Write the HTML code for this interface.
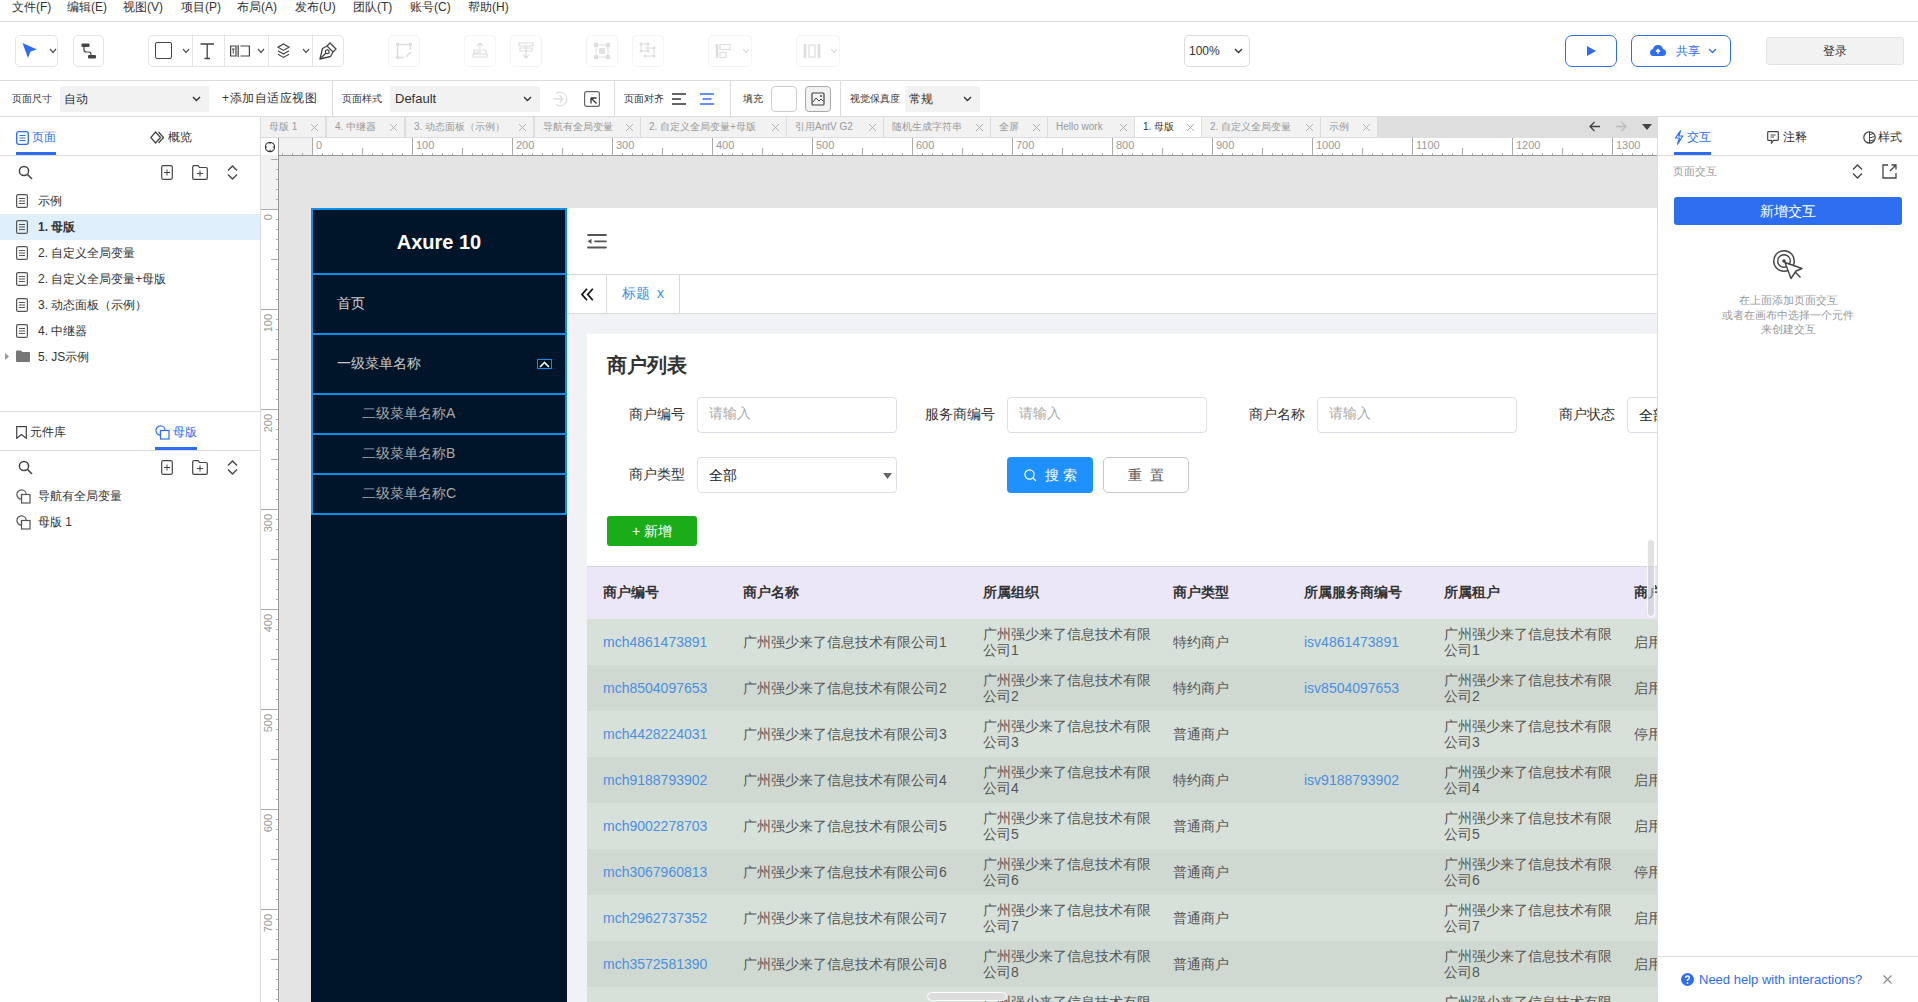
<!DOCTYPE html>
<html><head><meta charset="utf-8">
<style>
*{box-sizing:border-box;margin:0;padding:0}
html,body{width:1918px;height:1002px;overflow:hidden;background:#fff;font-family:"Liberation Sans",sans-serif;color:#333}
.a{position:absolute}
.hl{position:absolute;height:1px;background:#dcdcdc}
.vl{position:absolute;width:1px;background:#dcdcdc}
#menu span{position:absolute;top:0;font-size:12px;line-height:14px;color:#333;white-space:nowrap}
.tb{position:absolute;top:35px;height:32px;border:1px solid #e3e3e3;border-radius:5px;background:#fff}
.tbd{position:absolute;top:35px;height:32px;border:1px solid #f4f4f4;border-radius:5px;background:#fff}
.lbl{position:absolute;font-size:10px;line-height:14px;color:#333;white-space:nowrap}
.dd{position:absolute;top:86px;height:26px;background:#f2f2f2;font-size:12px;line-height:26px;color:#333;padding-left:4px;white-space:nowrap}
.tab{position:absolute;top:117px;height:20px;font-size:11px;line-height:19px;color:#999;white-space:nowrap;border-right:1px solid #dcdcdc}
.tab i{position:absolute;right:4px;top:0;font-style:normal;font-size:12px;color:#888}
.tree{position:absolute;left:0;width:260px;height:26px;font-size:12px;line-height:26px;color:#333;white-space:nowrap}
.tree .ic{position:absolute;left:17px;top:7px;width:11px;height:13px;border:1px solid #555;border-radius:2px}
.tree .ic:before{content:"";position:absolute;left:2px;top:3px;width:5px;height:1px;background:#555;box-shadow:0 2px 0 #555,0 4px 0 #555}
.tree span{position:absolute;left:38px}
</style></head>
<body>
<!-- menu bar -->
<div id="menu">
<span style="left:12px">文件(F)</span>
<span style="left:67px">编辑(E)</span>
<span style="left:123px">视图(V)</span>
<span style="left:181px">项目(P)</span>
<span style="left:237px">布局(A)</span>
<span style="left:295px">发布(U)</span>
<span style="left:353px">团队(T)</span>
<span style="left:410px">账号(C)</span>
<span style="left:468px">帮助(H)</span>
</div>
<div class="hl" style="left:0;top:21px;width:1918px"></div>
<div class="hl" style="left:0;top:80px;width:1918px"></div>
<div class="hl" style="left:0;top:116px;width:1918px"></div>


<!-- toolbar -->
<div class="tb" style="left:15px;width:43px">
 <svg class="a" style="left:5px;top:5px" width="20" height="20" viewBox="0 0 20 20"><path d="M1.5 2 L16 8.5 L9.5 10.5 L7 17 Z" fill="#2f6cf5"/></svg>
 <svg class="a" style="left:33px;top:12px" width="8" height="6" viewBox="0 0 8 6"><path d="M1 1 L4 4.5 L7 1" stroke="#555" stroke-width="1.2" fill="none"/></svg>
</div>
<div class="tb" style="left:73px;width:31px">
 <svg class="a" style="left:6px;top:6px" width="18" height="18" viewBox="0 0 18 18"><rect x="1.5" y="1.5" width="8" height="3.5" rx="1" fill="#444"/><rect x="8" y="13" width="8" height="3.5" rx="1" fill="#444"/><path d="M4 5 L4 8 Q4 10 6.5 10 L9 10 Q11 10 11 12.5 L11 13" stroke="#444" stroke-width="1.2" fill="none"/></svg>
</div>
<div class="tb" style="left:148px;width:196px">
 <div class="a" style="left:43px;top:0;width:1px;height:30px;background:#e3e3e3"></div>
 <div class="a" style="left:75px;top:0;width:1px;height:30px;background:#e3e3e3"></div>
 <div class="a" style="left:119px;top:0;width:1px;height:30px;background:#e3e3e3"></div>
 <div class="a" style="left:163px;top:0;width:1px;height:30px;background:#e3e3e3"></div>
 <div class="a" style="left:6px;top:6px;width:17px;height:17px;border:1.5px solid #444;border-radius:2px"></div>
 <svg class="a" style="left:33px;top:12px" width="8" height="6" viewBox="0 0 8 6"><path d="M1 1 L4 4.5 L7 1" stroke="#555" stroke-width="1.2" fill="none"/></svg>
 <svg class="a" style="left:51px;top:7px" width="15" height="17" viewBox="0 0 15 17"><path d="M0.5 1 L14 1 M7.2 1 L7.2 15.5 M4.5 15.5 L10 15.5" stroke="#444" stroke-width="1.3" fill="none"/></svg>
 <svg class="a" style="left:81px;top:9px" width="20" height="12" viewBox="0 0 20 12"><path d="M0.6 1 L6 1 L6 11 L0.6 11 Z M8.2 0 L8.2 12 M10.5 1 L19.4 1 L19.4 11 L10.5 11" stroke="#444" stroke-width="1.2" fill="none"/><path d="M2 4 L4.6 4 M3.3 4 L3.3 8.5" stroke="#444" stroke-width="1"/></svg>
 <svg class="a" style="left:108px;top:12px" width="8" height="6" viewBox="0 0 8 6"><path d="M1 1 L4 4.5 L7 1" stroke="#555" stroke-width="1.2" fill="none"/></svg>
 <svg class="a" style="left:128px;top:7px" width="13" height="16" viewBox="0 0 13 16"><path d="M6.5 1 L12 4.2 L6.5 7.4 L1 4.2 Z" stroke="#444" stroke-width="1.2" fill="none"/><path d="M1 7.8 L6.5 11 L12 7.8 M1 11.2 L6.5 14.4 L12 11.2" stroke="#444" stroke-width="1.2" fill="none"/></svg>
 <svg class="a" style="left:153px;top:12px" width="8" height="6" viewBox="0 0 8 6"><path d="M1 1 L4 4.5 L7 1" stroke="#555" stroke-width="1.2" fill="none"/></svg>
 <svg class="a" style="left:170px;top:6px" width="18" height="18" viewBox="0 0 18 18"><path d="M11 1 L17 7 L14 10 L11.5 14.5 L1 17 L3.5 6.5 L8 4 Z" stroke="#444" stroke-width="1.3" fill="none" stroke-linejoin="round"/><circle cx="8.3" cy="9.7" r="1.9" stroke="#444" stroke-width="1.2" fill="none"/><path d="M1 17 L7 11" stroke="#444" stroke-width="1.2"/><path d="M8 4 L14 10" stroke="#444" stroke-width="1.1"/></svg>
</div>
<div class="tbd" style="left:388px;width:32px"><svg class="a" style="left:5px;top:5px" width="20" height="20" viewBox="0 0 20 20"><rect x="2" y="2" width="3" height="3" fill="#ddd"/><rect x="15" y="2" width="3" height="3" fill="#ddd"/><rect x="2" y="15" width="3" height="3" fill="#ddd"/><path d="M3.5 5 L3.5 15 M5 3.5 L15 3.5 M16.5 5 L16.5 9 M5 16.5 L10 16.5 M12 16 L17 11" stroke="#ddd" stroke-width="1.5"/></svg></div>
<div class="tbd" style="left:464px;width:32px"><svg class="a" style="left:5px;top:5px" width="20" height="20" viewBox="0 0 20 20"><path d="M10 2 L7 5 M10 2 L13 5 M10 2 L10 12 M4 9 L8 9 L8 12 L4 12 Z M3 13 L17 13 L17 16 L3 16 Z M12 9 L16 9 L16 12" stroke="#ddd" stroke-width="1.2" fill="none"/></svg></div>
<div class="tbd" style="left:510px;width:32px"><svg class="a" style="left:5px;top:5px" width="20" height="20" viewBox="0 0 20 20"><path d="M3 2 L17 2 L17 5 L3 5 Z M4 7 L16 7 L16 10 L4 10 Z M10 5 L10 17 M7 14 L10 17 L13 14" stroke="#ddd" stroke-width="1.2" fill="none"/></svg></div>
<div class="tbd" style="left:586px;width:32px"><svg class="a" style="left:5px;top:5px" width="20" height="20" viewBox="0 0 20 20"><rect x="2" y="2" width="4" height="4" fill="#ddd"/><rect x="14" y="2" width="4" height="4" fill="#ddd"/><rect x="2" y="14" width="4" height="4" fill="#ddd"/><rect x="14" y="14" width="4" height="4" fill="#ddd"/><path d="M4 6 L4 14 M6 4 L14 4 M16 6 L16 14 M6 16 L14 16" stroke="#ddd" stroke-width="1"/><rect x="7" y="7" width="6" height="6" fill="#e2e2e2"/></svg></div>
<div class="tbd" style="left:632px;width:32px"><svg class="a" style="left:5px;top:5px" width="20" height="20" viewBox="0 0 20 20"><circle cx="3" cy="3" r="1.5" fill="#ddd"/><circle cx="10" cy="3" r="1.5" fill="#ddd"/><circle cx="3" cy="10" r="1.5" fill="#ddd"/><circle cx="10" cy="10" r="1.5" fill="#ddd"/><circle cx="16" cy="7" r="1.5" fill="#ddd"/><circle cx="16" cy="15" r="1.5" fill="#ddd"/><circle cx="7" cy="15" r="1.5" fill="#ddd"/><path d="M3 3 L10 3 L10 10 L3 10 Z M7 7 L16 7 L16 15 L7 15" stroke="#ddd" stroke-width="1" fill="none"/></svg></div>
<div class="tbd" style="left:708px;width:44px"><svg class="a" style="left:6px;top:6px" width="18" height="18" viewBox="0 0 18 18"><path d="M2 2 L2 16" stroke="#ddd" stroke-width="2.5"/><rect x="5" y="2.5" width="10" height="5" stroke="#ddd" stroke-width="1.2" fill="none"/><rect x="5" y="10.5" width="6" height="5" stroke="#ddd" stroke-width="1.2" fill="none"/></svg><svg class="a" style="left:33px;top:12px" width="8" height="6" viewBox="0 0 8 6"><path d="M1 1 L4 4.5 L7 1" stroke="#ddd" stroke-width="1.2" fill="none"/></svg></div>
<div class="tbd" style="left:796px;width:44px"><svg class="a" style="left:6px;top:6px" width="18" height="18" viewBox="0 0 18 18"><path d="M2 2 L2 16 M16 2 L16 16" stroke="#ddd" stroke-width="2.5"/><rect x="6" y="3" width="6" height="12" stroke="#ddd" stroke-width="1.2" fill="none"/></svg><svg class="a" style="left:33px;top:12px" width="8" height="6" viewBox="0 0 8 6"><path d="M1 1 L4 4.5 L7 1" stroke="#ddd" stroke-width="1.2" fill="none"/></svg></div>
<div class="tb" style="left:1184px;width:66px;border-color:#dcdcdc"><span class="a" style="left:4px;top:7px;font-size:12px;line-height:16px;color:#333">100%</span><svg class="a" style="left:49px;top:12px" width="9" height="6" viewBox="0 0 9 6"><path d="M1 1 L4.5 4.5 L8 1" stroke="#333" stroke-width="1.4" fill="none"/></svg></div>
<div class="tb" style="left:1565px;width:52px;border-color:#2f6cf5;border-radius:7px"><svg class="a" style="left:19px;top:9px" width="12" height="12" viewBox="0 0 12 12"><path d="M2 1 L11 6 L2 11 Z" fill="#2f6cf5"/></svg></div>
<div class="tb" style="left:1631px;width:100px;border-color:#2f6cf5;border-radius:7px">
 <svg class="a" style="left:17px;top:7px" width="18" height="16" viewBox="0 0 18 16"><path d="M4.5 13 Q1 13 1 9.5 Q1 6.5 4 6 Q5 2 9 2 Q13 2 14 6 Q17 6.5 17 9.5 Q17 13 13.5 13 Z" fill="#2f6cf5"/><path d="M9 11 L9 6.5 M7 8.5 L9 6.5 L11 8.5" stroke="#fff" stroke-width="1.3" fill="none"/></svg>
 <span class="a" style="left:44px;top:7px;font-size:12px;line-height:16px;color:#2f6cf5">共享</span>
 <svg class="a" style="left:76px;top:12px" width="9" height="6" viewBox="0 0 9 6"><path d="M1 1 L4.5 4.5 L8 1" stroke="#2f6cf5" stroke-width="1.3" fill="none"/></svg>
</div>
<div class="a" style="left:1766px;top:37px;width:138px;height:28px;background:#f2f2f2;border:1px solid #e3e3e3;border-radius:3px;font-size:12px;line-height:26px;text-align:center;color:#333">登录</div>

<!-- property bar -->
<span class="lbl" style="left:12px;top:92px">页面尺寸</span>
<div class="dd" style="left:60px;width:149px">自动<svg class="a" style="left:132px;top:10px" width="9" height="6" viewBox="0 0 9 6"><path d="M1 1 L4.5 4.5 L8 1" stroke="#333" stroke-width="1.4" fill="none"/></svg></div>
<span class="lbl" style="left:222px;top:91px;font-size:12px;letter-spacing:0.5px">+添加自适应视图</span>
<div class="vl" style="left:332px;top:81px;height:35px"></div>
<span class="lbl" style="left:342px;top:92px">页面样式</span>
<div class="dd" style="left:390px;width:150px;padding-left:5px;font-size:13px">Default<svg class="a" style="left:133px;top:10px" width="9" height="6" viewBox="0 0 9 6"><path d="M1 1 L4.5 4.5 L8 1" stroke="#333" stroke-width="1.4" fill="none"/></svg></div>
<svg class="a" style="left:552px;top:91px" width="16" height="16" viewBox="0 0 16 16"><path d="M4 2.5 A6.8 6.8 0 1 1 4 13.5" stroke="#ddd" stroke-width="1.2" fill="none"/><path d="M1.5 8 L11 8 M7.5 4.3 L11 8 L7.5 11.7" stroke="#ddd" stroke-width="1.3" fill="none"/></svg>
<svg class="a" style="left:584px;top:91px" width="16" height="16" viewBox="0 0 16 16"><rect x="0.6" y="0.6" width="14.8" height="14.8" rx="2" stroke="#666" stroke-width="1.2" fill="none"/><path d="M7 7 L12.5 12.5 M7 7 L7 12.5 M7 7 L12.5 7" stroke="#333" stroke-width="1.3" fill="none"/></svg>
<div class="vl" style="left:614px;top:81px;height:35px"></div>
<span class="lbl" style="left:624px;top:92px">页面对齐</span>
<svg class="a" style="left:672px;top:93px" width="14" height="12" viewBox="0 0 14 12"><path d="M0 1 L14 1 M0 6 L9 6 M0 11 L14 11" stroke="#333" stroke-width="1.6"/></svg>
<svg class="a" style="left:700px;top:93px" width="14" height="12" viewBox="0 0 14 12"><path d="M0 1 L14 1 M2.5 6 L11.5 6 M0 11 L14 11" stroke="#2f6cf5" stroke-width="1.6"/></svg>
<div class="vl" style="left:730px;top:81px;height:35px"></div>
<span class="lbl" style="left:743px;top:92px">填充</span>
<div class="a" style="left:771px;top:86px;width:26px;height:26px;border:1px solid #ccc;border-radius:4px;background:#fff"></div>
<div class="a" style="left:805px;top:86px;width:26px;height:26px;border:1px solid #aaa;border-radius:4px;background:#f2f2f2"><svg class="a" style="left:5px;top:5px" width="14" height="14" viewBox="0 0 14 14"><rect x="1" y="1" width="12" height="12" rx="1" stroke="#444" stroke-width="1.2" fill="none"/><path d="M2 10 L5 6 L8 9 L10 7 L12 9" stroke="#444" stroke-width="1" fill="none"/><circle cx="10" cy="4" r="1" fill="#444"/></svg></div>
<div class="vl" style="left:840px;top:81px;height:35px"></div>
<span class="lbl" style="left:850px;top:92px">视觉保真度</span>
<div class="dd" style="left:905px;width:75px;font-size:12px">常规<svg class="a" style="left:58px;top:10px" width="9" height="6" viewBox="0 0 9 6"><path d="M1 1 L4.5 4.5 L8 1" stroke="#333" stroke-width="1.4" fill="none"/></svg></div>

<!-- left panel -->
<!-- left panel content -->
<svg class="a" style="left:16px;top:131px" width="13" height="14" viewBox="0 0 13 14"><rect x="0.7" y="0.7" width="11.6" height="12.6" rx="2" stroke="#2f6cf5" stroke-width="1.3" fill="none"/><path d="M3.5 4.5 L9.5 4.5 M3.5 7 L9.5 7 M3.5 9.5 L9.5 9.5" stroke="#2f6cf5" stroke-width="1.1"/></svg>
<span class="a" style="left:32px;top:130px;font-size:12px;line-height:15px;color:#2f6cf5">页面</span>
<div class="a" style="left:16px;top:152px;width:40px;height:3px;background:#2f6cf5"></div>
<svg class="a" style="left:150px;top:131px" width="15" height="13" viewBox="0 0 15 13"><path d="M5.5 1 L10.5 6.5 L5.5 12 L0.8 6.5 Z" stroke="#444" stroke-width="1.3" fill="none"/><path d="M8.5 1 L13.5 6.5 L8.5 12" stroke="#444" stroke-width="1.3" fill="none"/></svg>
<span class="a" style="left:168px;top:130px;font-size:12px;line-height:15px;color:#333">概览</span>
<div class="hl" style="left:0;top:155px;width:260px"></div>
<svg class="a" style="left:18px;top:165px" width="15" height="15" viewBox="0 0 15 15"><circle cx="6" cy="6" r="4.6" stroke="#444" stroke-width="1.5" fill="none"/><path d="M9.5 9.5 L14 14" stroke="#444" stroke-width="1.6"/></svg>
<svg class="a" style="left:161px;top:165px" width="12" height="15" viewBox="0 0 12 15"><rect x="0.7" y="0.7" width="10.6" height="13.6" rx="1.5" stroke="#444" stroke-width="1.2" fill="none"/><path d="M6 4.5 L6 10.5 M3 7.5 L9 7.5" stroke="#444" stroke-width="1"/></svg>
<svg class="a" style="left:192px;top:165px" width="16" height="15" viewBox="0 0 16 15"><path d="M0.7 2 Q0.7 0.7 2 0.7 L6 0.7 L7.5 2.5 L14 2.5 Q15.3 2.5 15.3 3.8 L15.3 13 Q15.3 14.3 14 14.3 L2 14.3 Q0.7 14.3 0.7 13 Z" stroke="#444" stroke-width="1.2" fill="none"/><path d="M8 5.5 L8 11.5 M5 8.5 L11 8.5" stroke="#444" stroke-width="1.1"/></svg>
<svg class="a" style="left:227px;top:165px" width="11" height="15" viewBox="0 0 11 15"><path d="M1 5.5 L5.5 1 L10 5.5 M1 9.5 L5.5 14 L10 9.5" stroke="#444" stroke-width="1.4" fill="none"/></svg>
<div class="a" style="left:0;top:214px;width:260px;height:26px;background:#dff0fc"></div>
<svg class="a" style="left:16px;top:194px" width="12" height="14" viewBox="0 0 12 14"><rect x="0.6" y="0.6" width="10.8" height="12.8" rx="1.5" stroke="#555" stroke-width="1.2" fill="none"/><path d="M3 4.5 L9 4.5 M3 7 L9 7 M3 9.5 L9 9.5" stroke="#555" stroke-width="1.1"/></svg><span class="a" style="left:38px;top:193px;font-size:12px;line-height:16px;color:#333;">示例</span>
<svg class="a" style="left:16px;top:220px" width="12" height="14" viewBox="0 0 12 14"><rect x="0.6" y="0.6" width="10.8" height="12.8" rx="1.5" stroke="#555" stroke-width="1.2" fill="none"/><path d="M3 4.5 L9 4.5 M3 7 L9 7 M3 9.5 L9 9.5" stroke="#555" stroke-width="1.1"/></svg><span class="a" style="left:38px;top:219px;font-size:12px;line-height:16px;color:#333;font-weight:bold">1. 母版</span>
<svg class="a" style="left:16px;top:246px" width="12" height="14" viewBox="0 0 12 14"><rect x="0.6" y="0.6" width="10.8" height="12.8" rx="1.5" stroke="#555" stroke-width="1.2" fill="none"/><path d="M3 4.5 L9 4.5 M3 7 L9 7 M3 9.5 L9 9.5" stroke="#555" stroke-width="1.1"/></svg><span class="a" style="left:38px;top:245px;font-size:12px;line-height:16px;color:#333;">2. 自定义全局变量</span>
<svg class="a" style="left:16px;top:272px" width="12" height="14" viewBox="0 0 12 14"><rect x="0.6" y="0.6" width="10.8" height="12.8" rx="1.5" stroke="#555" stroke-width="1.2" fill="none"/><path d="M3 4.5 L9 4.5 M3 7 L9 7 M3 9.5 L9 9.5" stroke="#555" stroke-width="1.1"/></svg><span class="a" style="left:38px;top:271px;font-size:12px;line-height:16px;color:#333;">2. 自定义全局变量+母版</span>
<svg class="a" style="left:16px;top:298px" width="12" height="14" viewBox="0 0 12 14"><rect x="0.6" y="0.6" width="10.8" height="12.8" rx="1.5" stroke="#555" stroke-width="1.2" fill="none"/><path d="M3 4.5 L9 4.5 M3 7 L9 7 M3 9.5 L9 9.5" stroke="#555" stroke-width="1.1"/></svg><span class="a" style="left:38px;top:297px;font-size:12px;line-height:16px;color:#333;">3. 动态面板（示例）</span>
<svg class="a" style="left:16px;top:324px" width="12" height="14" viewBox="0 0 12 14"><rect x="0.6" y="0.6" width="10.8" height="12.8" rx="1.5" stroke="#555" stroke-width="1.2" fill="none"/><path d="M3 4.5 L9 4.5 M3 7 L9 7 M3 9.5 L9 9.5" stroke="#555" stroke-width="1.1"/></svg><span class="a" style="left:38px;top:323px;font-size:12px;line-height:16px;color:#333;">4. 中继器</span>
<svg class="a" style="left:5px;top:353px" width="4" height="7" viewBox="0 0 4 7"><path d="M0 0 L4 3.5 L0 7 Z" fill="#999"/></svg>
<svg class="a" style="left:16px;top:350px" width="14" height="12" viewBox="0 0 14 12"><path d="M0 1.5 Q0 0.5 1 0.5 L5 0.5 L6.5 2 L13 2 Q14 2 14 3 L14 11 Q14 12 13 12 L1 12 Q0 12 0 11 Z" fill="#777"/></svg>
<span class="a" style="left:38px;top:349px;font-size:12px;line-height:16px;color:#333">5. JS示例</span>
<div class="hl" style="left:0;top:411px;width:260px"></div>
<svg class="a" style="left:16px;top:426px" width="11" height="13" viewBox="0 0 11 13"><path d="M0.7 0.7 L10.3 0.7 L10.3 12.3 L5.5 8.5 L0.7 12.3 Z" stroke="#444" stroke-width="1.2" fill="none"/></svg>
<span class="a" style="left:30px;top:425px;font-size:12px;line-height:15px;color:#333">元件库</span>
<svg class="a" style="left:155px;top:425px" width="15" height="15" viewBox="0 0 15 15"><circle cx="5.5" cy="5.5" r="4.6" stroke="#2f6cf5" stroke-width="1.2" fill="none"/><rect x="5.5" y="5.5" width="8.5" height="8.5" stroke="#2f6cf5" stroke-width="1.2" fill="#fff"/><path d="M5.5 5.5 L5.5 10 M5.5 5.5 L10 5.5" stroke="#2f6cf5" stroke-width="1.2"/></svg>
<span class="a" style="left:173px;top:425px;font-size:12px;line-height:15px;color:#2f6cf5">母版</span>
<div class="a" style="left:155px;top:447px;width:42px;height:3px;background:#2f6cf5"></div>
<div class="hl" style="left:0;top:450px;width:260px"></div>
<svg class="a" style="left:18px;top:460px" width="15" height="15" viewBox="0 0 15 15"><circle cx="6" cy="6" r="4.6" stroke="#444" stroke-width="1.5" fill="none"/><path d="M9.5 9.5 L14 14" stroke="#444" stroke-width="1.6"/></svg>
<svg class="a" style="left:161px;top:460px" width="12" height="15" viewBox="0 0 12 15"><rect x="0.7" y="0.7" width="10.6" height="13.6" rx="1.5" stroke="#444" stroke-width="1.2" fill="none"/><path d="M6 4.5 L6 10.5 M3 7.5 L9 7.5" stroke="#444" stroke-width="1"/></svg>
<svg class="a" style="left:192px;top:460px" width="16" height="15" viewBox="0 0 16 15"><path d="M0.7 2 Q0.7 0.7 2 0.7 L6 0.7 L7.5 2.5 L14 2.5 Q15.3 2.5 15.3 3.8 L15.3 13 Q15.3 14.3 14 14.3 L2 14.3 Q0.7 14.3 0.7 13 Z" stroke="#444" stroke-width="1.2" fill="none"/><path d="M8 5.5 L8 11.5 M5 8.5 L11 8.5" stroke="#444" stroke-width="1.1"/></svg>
<svg class="a" style="left:227px;top:460px" width="11" height="15" viewBox="0 0 11 15"><path d="M1 5.5 L5.5 1 L10 5.5 M1 9.5 L5.5 14 L10 9.5" stroke="#444" stroke-width="1.4" fill="none"/></svg><svg class="a" style="left:16px;top:489px" width="15" height="15" viewBox="0 0 15 15"><circle cx="5.5" cy="5.5" r="4.6" stroke="#555" stroke-width="1.2" fill="none"/><rect x="5.5" y="5.5" width="8.5" height="8.5" stroke="#555" stroke-width="1.2" fill="#fff"/><path d="M5.5 5.5 L5.5 10 M5.5 5.5 L10 5.5" stroke="#555" stroke-width="1.2"/></svg>
<span class="a" style="left:38px;top:488px;font-size:12px;line-height:16px;color:#333">导航有全局变量</span>
<svg class="a" style="left:16px;top:515px" width="15" height="15" viewBox="0 0 15 15"><circle cx="5.5" cy="5.5" r="4.6" stroke="#555" stroke-width="1.2" fill="none"/><rect x="5.5" y="5.5" width="8.5" height="8.5" stroke="#555" stroke-width="1.2" fill="#fff"/><path d="M5.5 5.5 L5.5 10 M5.5 5.5 L10 5.5" stroke="#555" stroke-width="1.2"/></svg>
<span class="a" style="left:38px;top:514px;font-size:12px;line-height:16px;color:#333">母版 1</span>

<div class="vl" style="left:260px;top:117px;height:885px"></div>

<!-- tabs -->
<div class="a" style="left:261px;top:117px;width:1396px;height:21px;background:#dedede"></div>
<div class="a" style="left:261px;top:117px;width:65px;height:21px;background:#f2f2f2;border-right:1px solid #dcdcdc;border-bottom:1px solid #dcdcdc"><span class="a" style="left:8px;top:2px;font-size:10px;line-height:15px;color:#999;white-space:nowrap">母版 1</span><svg class="a" style="right:6px;top:6px" width="9" height="9" viewBox="0 0 9 9"><path d="M1 1 L8 8 M8 1 L1 8" stroke="#aaa" stroke-width="0.9"/></svg></div>
<div class="a" style="left:327px;top:117px;width:78px;height:21px;background:#f2f2f2;border-right:1px solid #dcdcdc;border-bottom:1px solid #dcdcdc"><span class="a" style="left:8px;top:2px;font-size:10px;line-height:15px;color:#999;white-space:nowrap">4. 中继器</span><svg class="a" style="right:6px;top:6px" width="9" height="9" viewBox="0 0 9 9"><path d="M1 1 L8 8 M8 1 L1 8" stroke="#aaa" stroke-width="0.9"/></svg></div>
<div class="a" style="left:406px;top:117px;width:128px;height:21px;background:#f2f2f2;border-right:1px solid #dcdcdc;border-bottom:1px solid #dcdcdc"><span class="a" style="left:8px;top:2px;font-size:10px;line-height:15px;color:#999;white-space:nowrap">3. 动态面板（示例）</span><svg class="a" style="right:6px;top:6px" width="9" height="9" viewBox="0 0 9 9"><path d="M1 1 L8 8 M8 1 L1 8" stroke="#aaa" stroke-width="0.9"/></svg></div>
<div class="a" style="left:535px;top:117px;width:106px;height:21px;background:#f2f2f2;border-right:1px solid #dcdcdc;border-bottom:1px solid #dcdcdc"><span class="a" style="left:8px;top:2px;font-size:10px;line-height:15px;color:#999;white-space:nowrap">导航有全局变量</span><svg class="a" style="right:6px;top:6px" width="9" height="9" viewBox="0 0 9 9"><path d="M1 1 L8 8 M8 1 L1 8" stroke="#aaa" stroke-width="0.9"/></svg></div>
<div class="a" style="left:641px;top:117px;width:146px;height:21px;background:#f2f2f2;border-right:1px solid #dcdcdc;border-bottom:1px solid #dcdcdc"><span class="a" style="left:8px;top:2px;font-size:10px;line-height:15px;color:#999;white-space:nowrap">2. 自定义全局变量+母版</span><svg class="a" style="right:6px;top:6px" width="9" height="9" viewBox="0 0 9 9"><path d="M1 1 L8 8 M8 1 L1 8" stroke="#aaa" stroke-width="0.9"/></svg></div>
<div class="a" style="left:787px;top:117px;width:97px;height:21px;background:#f2f2f2;border-right:1px solid #dcdcdc;border-bottom:1px solid #dcdcdc"><span class="a" style="left:8px;top:2px;font-size:10px;line-height:15px;color:#999;white-space:nowrap">引用AntV G2</span><svg class="a" style="right:6px;top:6px" width="9" height="9" viewBox="0 0 9 9"><path d="M1 1 L8 8 M8 1 L1 8" stroke="#aaa" stroke-width="0.9"/></svg></div>
<div class="a" style="left:884px;top:117px;width:107px;height:21px;background:#f2f2f2;border-right:1px solid #dcdcdc;border-bottom:1px solid #dcdcdc"><span class="a" style="left:8px;top:2px;font-size:10px;line-height:15px;color:#999;white-space:nowrap">随机生成字符串</span><svg class="a" style="right:6px;top:6px" width="9" height="9" viewBox="0 0 9 9"><path d="M1 1 L8 8 M8 1 L1 8" stroke="#aaa" stroke-width="0.9"/></svg></div>
<div class="a" style="left:991px;top:117px;width:57px;height:21px;background:#f2f2f2;border-right:1px solid #dcdcdc;border-bottom:1px solid #dcdcdc"><span class="a" style="left:8px;top:2px;font-size:10px;line-height:15px;color:#999;white-space:nowrap">全屏</span><svg class="a" style="right:6px;top:6px" width="9" height="9" viewBox="0 0 9 9"><path d="M1 1 L8 8 M8 1 L1 8" stroke="#aaa" stroke-width="0.9"/></svg></div>
<div class="a" style="left:1048px;top:117px;width:87px;height:21px;background:#f2f2f2;border-right:1px solid #dcdcdc;border-bottom:1px solid #dcdcdc"><span class="a" style="left:8px;top:2px;font-size:10px;line-height:15px;color:#999;white-space:nowrap">Hello work</span><svg class="a" style="right:6px;top:6px" width="9" height="9" viewBox="0 0 9 9"><path d="M1 1 L8 8 M8 1 L1 8" stroke="#aaa" stroke-width="0.9"/></svg></div>
<div class="a" style="left:1135px;top:117px;width:67px;height:21px;background:#fff;border-right:1px solid #dcdcdc;border-bottom:1px solid #dcdcdc"><span class="a" style="left:8px;top:2px;font-size:10px;line-height:15px;color:#333;white-space:nowrap">1. 母版</span><svg class="a" style="right:6px;top:6px" width="9" height="9" viewBox="0 0 9 9"><path d="M1 1 L8 8 M8 1 L1 8" stroke="#aaa" stroke-width="0.9"/></svg></div>
<div class="a" style="left:1202px;top:117px;width:119px;height:21px;background:#f2f2f2;border-right:1px solid #dcdcdc;border-bottom:1px solid #dcdcdc"><span class="a" style="left:8px;top:2px;font-size:10px;line-height:15px;color:#999;white-space:nowrap">2. 自定义全局变量</span><svg class="a" style="right:6px;top:6px" width="9" height="9" viewBox="0 0 9 9"><path d="M1 1 L8 8 M8 1 L1 8" stroke="#aaa" stroke-width="0.9"/></svg></div>
<div class="a" style="left:1321px;top:117px;width:57px;height:21px;background:#f2f2f2;border-right:1px solid #dcdcdc;border-bottom:1px solid #dcdcdc"><span class="a" style="left:8px;top:2px;font-size:10px;line-height:15px;color:#999;white-space:nowrap">示例</span><svg class="a" style="right:6px;top:6px" width="9" height="9" viewBox="0 0 9 9"><path d="M1 1 L8 8 M8 1 L1 8" stroke="#aaa" stroke-width="0.9"/></svg></div>
<svg class="a" style="left:1589px;top:121px" width="12" height="11" viewBox="0 0 12 11"><path d="M11 5.5 L1.5 5.5 M5.5 1 L1 5.5 L5.5 10" stroke="#444" stroke-width="1.3" fill="none"/></svg>
<svg class="a" style="left:1615px;top:121px" width="12" height="11" viewBox="0 0 12 11"><path d="M1 5.5 L10.5 5.5 M6.5 1 L11 5.5 L6.5 10" stroke="#bbb" stroke-width="1.3" fill="none"/></svg>
<svg class="a" style="left:1642px;top:124px" width="10" height="6" viewBox="0 0 10 6"><path d="M0 0 L10 0 L5 6 Z" fill="#444"/></svg>
<!-- rulers -->
<div class="a" style="left:261px;top:138px;width:18px;height:18px;background:#fff;border-right:1px solid #999;border-bottom:1px solid #ccc"></div>
<svg class="a" style="left:264px;top:141px" width="12" height="12" viewBox="0 0 12 12"><circle cx="6" cy="6" r="4.6" stroke="#333" stroke-width="1.1" fill="none"/><path d="M6 1.4 L6 3.2 M6 8.8 L6 10.6 M1.4 6 L3.2 6 M8.8 6 L10.6 6" stroke="#333" stroke-width="1.1"/></svg>
<svg class="a" style="left:279px;top:138px" width="1378" height="18" viewBox="0 0 1378 18"><rect x="0" y="0" width="1378" height="18" fill="#fff"/><rect x="0" y="0" width="33" height="18" fill="#f2f2f2"/><path d="M3.5 15 L3.5 18 M13.5 15 L13.5 18 M23.5 15 L23.5 18 M33.5 0 L33.5 18 M43.5 15 L43.5 18 M53.5 15 L53.5 18 M63.5 15 L63.5 18 M73.5 15 L73.5 18 M83.5 10 L83.5 18 M93.5 15 L93.5 18 M103.5 15 L103.5 18 M113.5 15 L113.5 18 M123.5 15 L123.5 18 M133.5 0 L133.5 18 M143.5 15 L143.5 18 M153.5 15 L153.5 18 M163.5 15 L163.5 18 M173.5 15 L173.5 18 M183.5 10 L183.5 18 M193.5 15 L193.5 18 M203.5 15 L203.5 18 M213.5 15 L213.5 18 M223.5 15 L223.5 18 M233.5 0 L233.5 18 M243.5 15 L243.5 18 M253.5 15 L253.5 18 M263.5 15 L263.5 18 M273.5 15 L273.5 18 M283.5 10 L283.5 18 M293.5 15 L293.5 18 M303.5 15 L303.5 18 M313.5 15 L313.5 18 M323.5 15 L323.5 18 M333.5 0 L333.5 18 M343.5 15 L343.5 18 M353.5 15 L353.5 18 M363.5 15 L363.5 18 M373.5 15 L373.5 18 M383.5 10 L383.5 18 M393.5 15 L393.5 18 M403.5 15 L403.5 18 M413.5 15 L413.5 18 M423.5 15 L423.5 18 M433.5 0 L433.5 18 M443.5 15 L443.5 18 M453.5 15 L453.5 18 M463.5 15 L463.5 18 M473.5 15 L473.5 18 M483.5 10 L483.5 18 M493.5 15 L493.5 18 M503.5 15 L503.5 18 M513.5 15 L513.5 18 M523.5 15 L523.5 18 M533.5 0 L533.5 18 M543.5 15 L543.5 18 M553.5 15 L553.5 18 M563.5 15 L563.5 18 M573.5 15 L573.5 18 M583.5 10 L583.5 18 M593.5 15 L593.5 18 M603.5 15 L603.5 18 M613.5 15 L613.5 18 M623.5 15 L623.5 18 M633.5 0 L633.5 18 M643.5 15 L643.5 18 M653.5 15 L653.5 18 M663.5 15 L663.5 18 M673.5 15 L673.5 18 M683.5 10 L683.5 18 M693.5 15 L693.5 18 M703.5 15 L703.5 18 M713.5 15 L713.5 18 M723.5 15 L723.5 18 M733.5 0 L733.5 18 M743.5 15 L743.5 18 M753.5 15 L753.5 18 M763.5 15 L763.5 18 M773.5 15 L773.5 18 M783.5 10 L783.5 18 M793.5 15 L793.5 18 M803.5 15 L803.5 18 M813.5 15 L813.5 18 M823.5 15 L823.5 18 M833.5 0 L833.5 18 M843.5 15 L843.5 18 M853.5 15 L853.5 18 M863.5 15 L863.5 18 M873.5 15 L873.5 18 M883.5 10 L883.5 18 M893.5 15 L893.5 18 M903.5 15 L903.5 18 M913.5 15 L913.5 18 M923.5 15 L923.5 18 M933.5 0 L933.5 18 M943.5 15 L943.5 18 M953.5 15 L953.5 18 M963.5 15 L963.5 18 M973.5 15 L973.5 18 M983.5 10 L983.5 18 M993.5 15 L993.5 18 M1003.5 15 L1003.5 18 M1013.5 15 L1013.5 18 M1023.5 15 L1023.5 18 M1033.5 0 L1033.5 18 M1043.5 15 L1043.5 18 M1053.5 15 L1053.5 18 M1063.5 15 L1063.5 18 M1073.5 15 L1073.5 18 M1083.5 10 L1083.5 18 M1093.5 15 L1093.5 18 M1103.5 15 L1103.5 18 M1113.5 15 L1113.5 18 M1123.5 15 L1123.5 18 M1133.5 0 L1133.5 18 M1143.5 15 L1143.5 18 M1153.5 15 L1153.5 18 M1163.5 15 L1163.5 18 M1173.5 15 L1173.5 18 M1183.5 10 L1183.5 18 M1193.5 15 L1193.5 18 M1203.5 15 L1203.5 18 M1213.5 15 L1213.5 18 M1223.5 15 L1223.5 18 M1233.5 0 L1233.5 18 M1243.5 15 L1243.5 18 M1253.5 15 L1253.5 18 M1263.5 15 L1263.5 18 M1273.5 15 L1273.5 18 M1283.5 10 L1283.5 18 M1293.5 15 L1293.5 18 M1303.5 15 L1303.5 18 M1313.5 15 L1313.5 18 M1323.5 15 L1323.5 18 M1333.5 0 L1333.5 18 M1343.5 15 L1343.5 18 M1353.5 15 L1353.5 18 M1363.5 15 L1363.5 18 M1373.5 15 L1373.5 18 " stroke="#aaa" stroke-width="1"/><path d="M0 17.5 L1378 17.5" stroke="#999" stroke-width="1"/><text x="37" y="11.3" font-family="Liberation Sans" font-size="11" fill="#999">0</text><text x="137" y="11.3" font-family="Liberation Sans" font-size="11" fill="#999">100</text><text x="237" y="11.3" font-family="Liberation Sans" font-size="11" fill="#999">200</text><text x="337" y="11.3" font-family="Liberation Sans" font-size="11" fill="#999">300</text><text x="437" y="11.3" font-family="Liberation Sans" font-size="11" fill="#999">400</text><text x="537" y="11.3" font-family="Liberation Sans" font-size="11" fill="#999">500</text><text x="637" y="11.3" font-family="Liberation Sans" font-size="11" fill="#999">600</text><text x="737" y="11.3" font-family="Liberation Sans" font-size="11" fill="#999">700</text><text x="837" y="11.3" font-family="Liberation Sans" font-size="11" fill="#999">800</text><text x="937" y="11.3" font-family="Liberation Sans" font-size="11" fill="#999">900</text><text x="1037" y="11.3" font-family="Liberation Sans" font-size="11" fill="#999">1000</text><text x="1137" y="11.3" font-family="Liberation Sans" font-size="11" fill="#999">1100</text><text x="1237" y="11.3" font-family="Liberation Sans" font-size="11" fill="#999">1200</text><text x="1337" y="11.3" font-family="Liberation Sans" font-size="11" fill="#999">1300</text></svg>
<svg class="a" style="left:261px;top:155px" width="18" height="847" viewBox="0 0 18 847"><rect x="0" y="0" width="18" height="847" fill="#fff"/><rect x="0" y="0" width="18" height="54" fill="#f2f2f2"/><path d="M10 4.5 L18 4.5 M15 14.5 L18 14.5 M15 24.5 L18 24.5 M15 34.5 L18 34.5 M15 44.5 L18 44.5 M0 54.5 L18 54.5 M15 64.5 L18 64.5 M15 74.5 L18 74.5 M15 84.5 L18 84.5 M15 94.5 L18 94.5 M10 104.5 L18 104.5 M15 114.5 L18 114.5 M15 124.5 L18 124.5 M15 134.5 L18 134.5 M15 144.5 L18 144.5 M0 154.5 L18 154.5 M15 164.5 L18 164.5 M15 174.5 L18 174.5 M15 184.5 L18 184.5 M15 194.5 L18 194.5 M10 204.5 L18 204.5 M15 214.5 L18 214.5 M15 224.5 L18 224.5 M15 234.5 L18 234.5 M15 244.5 L18 244.5 M0 254.5 L18 254.5 M15 264.5 L18 264.5 M15 274.5 L18 274.5 M15 284.5 L18 284.5 M15 294.5 L18 294.5 M10 304.5 L18 304.5 M15 314.5 L18 314.5 M15 324.5 L18 324.5 M15 334.5 L18 334.5 M15 344.5 L18 344.5 M0 354.5 L18 354.5 M15 364.5 L18 364.5 M15 374.5 L18 374.5 M15 384.5 L18 384.5 M15 394.5 L18 394.5 M10 404.5 L18 404.5 M15 414.5 L18 414.5 M15 424.5 L18 424.5 M15 434.5 L18 434.5 M15 444.5 L18 444.5 M0 454.5 L18 454.5 M15 464.5 L18 464.5 M15 474.5 L18 474.5 M15 484.5 L18 484.5 M15 494.5 L18 494.5 M10 504.5 L18 504.5 M15 514.5 L18 514.5 M15 524.5 L18 524.5 M15 534.5 L18 534.5 M15 544.5 L18 544.5 M0 554.5 L18 554.5 M15 564.5 L18 564.5 M15 574.5 L18 574.5 M15 584.5 L18 584.5 M15 594.5 L18 594.5 M10 604.5 L18 604.5 M15 614.5 L18 614.5 M15 624.5 L18 624.5 M15 634.5 L18 634.5 M15 644.5 L18 644.5 M0 654.5 L18 654.5 M15 664.5 L18 664.5 M15 674.5 L18 674.5 M15 684.5 L18 684.5 M15 694.5 L18 694.5 M10 704.5 L18 704.5 M15 714.5 L18 714.5 M15 724.5 L18 724.5 M15 734.5 L18 734.5 M15 744.5 L18 744.5 M0 754.5 L18 754.5 M15 764.5 L18 764.5 M15 774.5 L18 774.5 M15 784.5 L18 784.5 M15 794.5 L18 794.5 M10 804.5 L18 804.5 M15 814.5 L18 814.5 M15 824.5 L18 824.5 M15 834.5 L18 834.5 M15 844.5 L18 844.5 " stroke="#aaa" stroke-width="1"/><path d="M17.5 0 L17.5 847" stroke="#999" stroke-width="1"/><text transform="translate(11,59) rotate(-90)" text-anchor="end" font-family="Liberation Sans" font-size="11" fill="#999">0</text><text transform="translate(11,159) rotate(-90)" text-anchor="end" font-family="Liberation Sans" font-size="11" fill="#999">100</text><text transform="translate(11,259) rotate(-90)" text-anchor="end" font-family="Liberation Sans" font-size="11" fill="#999">200</text><text transform="translate(11,359) rotate(-90)" text-anchor="end" font-family="Liberation Sans" font-size="11" fill="#999">300</text><text transform="translate(11,459) rotate(-90)" text-anchor="end" font-family="Liberation Sans" font-size="11" fill="#999">400</text><text transform="translate(11,559) rotate(-90)" text-anchor="end" font-family="Liberation Sans" font-size="11" fill="#999">500</text><text transform="translate(11,659) rotate(-90)" text-anchor="end" font-family="Liberation Sans" font-size="11" fill="#999">600</text><text transform="translate(11,759) rotate(-90)" text-anchor="end" font-family="Liberation Sans" font-size="11" fill="#999">700</text><text transform="translate(11,859) rotate(-90)" text-anchor="end" font-family="Liberation Sans" font-size="11" fill="#999">800</text></svg>


<!-- page content -->
<div class="a" style="left:279px;top:156px;width:1378px;height:846px;background:#e4e4e4;overflow:hidden">
<div class="a" style="left:32px;top:52px;width:1400px;height:900px">
<div class="a" style="left:0;top:0;width:256px;height:800px;background:#001529"></div>
<div class="a" style="left:0;top:0px;width:256px;height:2px;background:#0b8fe9"></div>
<div class="a" style="left:0;top:65px;width:256px;height:2px;background:#0b8fe9"></div>
<div class="a" style="left:0;top:125px;width:256px;height:2px;background:#0b8fe9"></div>
<div class="a" style="left:0;top:185px;width:256px;height:2px;background:#0b8fe9"></div>
<div class="a" style="left:0;top:225px;width:256px;height:2px;background:#0b8fe9"></div>
<div class="a" style="left:0;top:265px;width:256px;height:2px;background:#0b8fe9"></div>
<div class="a" style="left:0;top:305px;width:256px;height:2px;background:#0b8fe9"></div>
<div class="a" style="left:0;top:0;width:2px;height:307px;background:#0b8fe9"></div>
<div class="a" style="left:254px;top:0;width:2px;height:307px;background:#0b8fe9"></div>
<div class="a" style="left:0;top:21px;width:256px;text-align:center;font-size:20px;line-height:26px;font-weight:bold;color:#fff">Axure 10</div>
<span class="a" style="left:26px;top:86px;font-size:14px;line-height:18px;color:#d0d0d0">首页</span>
<span class="a" style="left:26px;top:146px;font-size:14px;line-height:18px;color:#c8c8c8">一级菜单名称</span>
<div class="a" style="left:226px;top:151px;width:15px;height:10px;border:1px solid #0b8fe9;background:#001529"><svg class="a" style="left:1px;top:1px" width="11" height="7" viewBox="0 0 11 7"><path d="M1 6 L5.5 1.5 L10 6" stroke="#fff" stroke-width="1.6" fill="none"/></svg></div>
<span class="a" style="left:51px;top:196px;font-size:14px;line-height:18px;color:#a8a8a8">二级菜单名称A</span>
<span class="a" style="left:51px;top:236px;font-size:14px;line-height:18px;color:#a8a8a8">二级菜单名称B</span>
<span class="a" style="left:51px;top:276px;font-size:14px;line-height:18px;color:#a8a8a8">二级菜单名称C</span>
<div class="a" style="left:256px;top:0;width:1200px;height:67px;background:#fff;border-bottom:1px solid #d9d9d9"></div>
<svg class="a" style="left:276px;top:25px" width="20" height="16" viewBox="0 0 20 16"><path d="M1 2 L19 2 M8 8.3 L19 8.3 M1 14.5 L19 14.5" stroke="#555" stroke-width="1.8" stroke-linecap="round"/><path d="M0.5 8.3 L4.5 5.8 L4.5 10.8 Z" fill="#555"/></svg>
<div class="a" style="left:256px;top:67px;width:1200px;height:39px;background:#fff;border-bottom:1px solid #d9d9d9"></div>
<div class="a" style="left:295px;top:67px;width:1px;height:38px;background:#d9d9d9"></div>
<div class="a" style="left:368px;top:67px;width:1px;height:38px;background:#d9d9d9"></div>
<svg class="a" style="left:270px;top:80px" width="13" height="13" viewBox="0 0 13 13"><path d="M6 0.8 L1 6.5 L6 12.2 M11.8 0.8 L6.8 6.5 L11.8 12.2" stroke="#111" stroke-width="1.7" fill="none"/></svg>
<span class="a" style="left:311px;top:76px;font-size:14px;line-height:18px;color:#3d8ee6">标题</span><span class="a" style="left:346px;top:76px;font-size:14px;line-height:18px;color:#3d8ee6">x</span>
<div class="a" style="left:256px;top:106px;width:1200px;height:800px;background:#f0f2f5"></div>
<div class="a" style="left:276px;top:126px;width:1200px;height:800px;background:#fff"></div>
<span class="a" style="left:296px;top:145px;font-size:20px;line-height:24px;font-weight:bold;color:#333">商户列表</span>
<span class="a" style="left:318px;top:197px;font-size:14px;line-height:18px;color:#333;white-space:nowrap">商户编号</span>
<div class="a" style="left:386px;top:189px;width:200px;height:36px;border:1px solid #dcdfe6;border-radius:4px;background:#fff"><span class="a" style="left:11px;top:6px;font-size:14px;line-height:18px;color:#aaa;white-space:nowrap">请输入</span></div>
<span class="a" style="left:614px;top:197px;font-size:14px;line-height:18px;color:#333;white-space:nowrap">服务商编号</span>
<div class="a" style="left:696px;top:189px;width:200px;height:36px;border:1px solid #dcdfe6;border-radius:4px;background:#fff"><span class="a" style="left:11px;top:6px;font-size:14px;line-height:18px;color:#aaa;white-space:nowrap">请输入</span></div>
<span class="a" style="left:938px;top:197px;font-size:14px;line-height:18px;color:#333;white-space:nowrap">商户名称</span>
<div class="a" style="left:1006px;top:189px;width:200px;height:36px;border:1px solid #dcdfe6;border-radius:4px;background:#fff"><span class="a" style="left:11px;top:6px;font-size:14px;line-height:18px;color:#aaa;white-space:nowrap">请输入</span></div>
<span class="a" style="left:1248px;top:197px;font-size:14px;line-height:18px;color:#333;white-space:nowrap">商户状态</span>
<div class="a" style="left:1316px;top:189px;width:200px;height:36px;border:1px solid #dcdfe6;border-radius:4px;background:#fff"><span class="a" style="left:11px;top:8px;font-size:14px;line-height:18px;color:#222;white-space:nowrap">全部</span></div>
<span class="a" style="left:318px;top:257px;font-size:14px;line-height:18px;color:#333;white-space:nowrap">商户类型</span>
<div class="a" style="left:386px;top:249px;width:200px;height:36px;border:1px solid #dcdfe6;border-radius:4px;background:#fff"><span class="a" style="left:11px;top:8px;font-size:14px;line-height:18px;color:#222;white-space:nowrap">全部</span></div>
<svg class="a" style="left:572px;top:265px" width="9" height="6" viewBox="0 0 9 6"><path d="M0 0 L9 0 L4.5 6 Z" fill="#666"/></svg>
<div class="a" style="left:696px;top:249px;width:86px;height:36px;background:#1e90ff;border-radius:4px"><svg class="a" style="left:17px;top:12px" width="13" height="13" viewBox="0 0 13 13"><circle cx="5.5" cy="5.5" r="4.6" stroke="#fff" stroke-width="1.2" fill="none"/><path d="M8.8 8.8 L12 12" stroke="#fff" stroke-width="1.2"/></svg><span class="a" style="left:38px;top:9px;font-size:14px;line-height:18px;color:#fff;letter-spacing:4px;white-space:nowrap">搜索</span></div>
<div class="a" style="left:792px;top:249px;width:86px;height:36px;background:#fff;border:1px solid #c8c8c8;border-radius:5px"><span class="a" style="left:24px;top:8px;font-size:14px;line-height:18px;color:#555;letter-spacing:8px;white-space:nowrap">重置</span></div>
<div class="a" style="left:296px;top:308px;width:90px;height:30px;background:#1aad19;border-radius:3px;text-align:center;font-size:14px;line-height:30px;color:#fff">+ 新增</div>
<div class="a" style="left:276px;top:358px;width:1200px;height:53px;background:#ebe7f6;border-top:1px solid #d8d4e6"></div>
<span class="a" style="left:292px;top:375px;font-size:14px;line-height:18px;font-weight:bold;color:#333;white-space:nowrap">商户编号</span>
<span class="a" style="left:432px;top:375px;font-size:14px;line-height:18px;font-weight:bold;color:#333;white-space:nowrap">商户名称</span>
<span class="a" style="left:672px;top:375px;font-size:14px;line-height:18px;font-weight:bold;color:#333;white-space:nowrap">所属组织</span>
<span class="a" style="left:862px;top:375px;font-size:14px;line-height:18px;font-weight:bold;color:#333;white-space:nowrap">商户类型</span>
<span class="a" style="left:993px;top:375px;font-size:14px;line-height:18px;font-weight:bold;color:#333;white-space:nowrap">所属服务商编号</span>
<span class="a" style="left:1133px;top:375px;font-size:14px;line-height:18px;font-weight:bold;color:#333;white-space:nowrap">所属租户</span>
<span class="a" style="left:1323px;top:375px;font-size:14px;line-height:18px;font-weight:bold;color:#333;white-space:nowrap">商户状态</span>
<div class="a" style="left:276px;top:411px;width:1200px;height:46px;background:#d8e1d9"></div>
<span class="a" style="left:292px;top:425px;font-size:14px;line-height:18px;color:#4a8fe0;white-space:nowrap">mch4861473891</span>
<span class="a" style="left:432px;top:425px;font-size:14px;line-height:18px;color:#555;white-space:nowrap">广州强少来了信息技术有限公司1</span>
<span class="a" style="left:672px;top:418px;font-size:14px;line-height:16px;color:#555;white-space:nowrap">广州强少来了信息技术有限<br>公司1</span>
<span class="a" style="left:862px;top:425px;font-size:14px;line-height:18px;color:#555;white-space:nowrap">特约商户</span>
<span class="a" style="left:993px;top:425px;font-size:14px;line-height:18px;color:#4a8fe0;white-space:nowrap">isv4861473891</span>
<span class="a" style="left:1133px;top:418px;font-size:14px;line-height:16px;color:#555;white-space:nowrap">广州强少来了信息技术有限<br>公司1</span>
<span class="a" style="left:1323px;top:425px;font-size:14px;line-height:18px;color:#555;white-space:nowrap">启用</span>
<div class="a" style="left:276px;top:457px;width:1200px;height:46px;background:#d0d9d1"></div>
<span class="a" style="left:292px;top:471px;font-size:14px;line-height:18px;color:#4a8fe0;white-space:nowrap">mch8504097653</span>
<span class="a" style="left:432px;top:471px;font-size:14px;line-height:18px;color:#555;white-space:nowrap">广州强少来了信息技术有限公司2</span>
<span class="a" style="left:672px;top:464px;font-size:14px;line-height:16px;color:#555;white-space:nowrap">广州强少来了信息技术有限<br>公司2</span>
<span class="a" style="left:862px;top:471px;font-size:14px;line-height:18px;color:#555;white-space:nowrap">特约商户</span>
<span class="a" style="left:993px;top:471px;font-size:14px;line-height:18px;color:#4a8fe0;white-space:nowrap">isv8504097653</span>
<span class="a" style="left:1133px;top:464px;font-size:14px;line-height:16px;color:#555;white-space:nowrap">广州强少来了信息技术有限<br>公司2</span>
<span class="a" style="left:1323px;top:471px;font-size:14px;line-height:18px;color:#555;white-space:nowrap">启用</span>
<div class="a" style="left:276px;top:503px;width:1200px;height:46px;background:#d8e1d9"></div>
<span class="a" style="left:292px;top:517px;font-size:14px;line-height:18px;color:#4a8fe0;white-space:nowrap">mch4428224031</span>
<span class="a" style="left:432px;top:517px;font-size:14px;line-height:18px;color:#555;white-space:nowrap">广州强少来了信息技术有限公司3</span>
<span class="a" style="left:672px;top:510px;font-size:14px;line-height:16px;color:#555;white-space:nowrap">广州强少来了信息技术有限<br>公司3</span>
<span class="a" style="left:862px;top:517px;font-size:14px;line-height:18px;color:#555;white-space:nowrap">普通商户</span>
<span class="a" style="left:1133px;top:510px;font-size:14px;line-height:16px;color:#555;white-space:nowrap">广州强少来了信息技术有限<br>公司3</span>
<span class="a" style="left:1323px;top:517px;font-size:14px;line-height:18px;color:#555;white-space:nowrap">停用</span>
<div class="a" style="left:276px;top:549px;width:1200px;height:46px;background:#d0d9d1"></div>
<span class="a" style="left:292px;top:563px;font-size:14px;line-height:18px;color:#4a8fe0;white-space:nowrap">mch9188793902</span>
<span class="a" style="left:432px;top:563px;font-size:14px;line-height:18px;color:#555;white-space:nowrap">广州强少来了信息技术有限公司4</span>
<span class="a" style="left:672px;top:556px;font-size:14px;line-height:16px;color:#555;white-space:nowrap">广州强少来了信息技术有限<br>公司4</span>
<span class="a" style="left:862px;top:563px;font-size:14px;line-height:18px;color:#555;white-space:nowrap">特约商户</span>
<span class="a" style="left:993px;top:563px;font-size:14px;line-height:18px;color:#4a8fe0;white-space:nowrap">isv9188793902</span>
<span class="a" style="left:1133px;top:556px;font-size:14px;line-height:16px;color:#555;white-space:nowrap">广州强少来了信息技术有限<br>公司4</span>
<span class="a" style="left:1323px;top:563px;font-size:14px;line-height:18px;color:#555;white-space:nowrap">启用</span>
<div class="a" style="left:276px;top:595px;width:1200px;height:46px;background:#d8e1d9"></div>
<span class="a" style="left:292px;top:609px;font-size:14px;line-height:18px;color:#4a8fe0;white-space:nowrap">mch9002278703</span>
<span class="a" style="left:432px;top:609px;font-size:14px;line-height:18px;color:#555;white-space:nowrap">广州强少来了信息技术有限公司5</span>
<span class="a" style="left:672px;top:602px;font-size:14px;line-height:16px;color:#555;white-space:nowrap">广州强少来了信息技术有限<br>公司5</span>
<span class="a" style="left:862px;top:609px;font-size:14px;line-height:18px;color:#555;white-space:nowrap">普通商户</span>
<span class="a" style="left:1133px;top:602px;font-size:14px;line-height:16px;color:#555;white-space:nowrap">广州强少来了信息技术有限<br>公司5</span>
<span class="a" style="left:1323px;top:609px;font-size:14px;line-height:18px;color:#555;white-space:nowrap">启用</span>
<div class="a" style="left:276px;top:641px;width:1200px;height:46px;background:#d0d9d1"></div>
<span class="a" style="left:292px;top:655px;font-size:14px;line-height:18px;color:#4a8fe0;white-space:nowrap">mch3067960813</span>
<span class="a" style="left:432px;top:655px;font-size:14px;line-height:18px;color:#555;white-space:nowrap">广州强少来了信息技术有限公司6</span>
<span class="a" style="left:672px;top:648px;font-size:14px;line-height:16px;color:#555;white-space:nowrap">广州强少来了信息技术有限<br>公司6</span>
<span class="a" style="left:862px;top:655px;font-size:14px;line-height:18px;color:#555;white-space:nowrap">普通商户</span>
<span class="a" style="left:1133px;top:648px;font-size:14px;line-height:16px;color:#555;white-space:nowrap">广州强少来了信息技术有限<br>公司6</span>
<span class="a" style="left:1323px;top:655px;font-size:14px;line-height:18px;color:#555;white-space:nowrap">停用</span>
<div class="a" style="left:276px;top:687px;width:1200px;height:46px;background:#d8e1d9"></div>
<span class="a" style="left:292px;top:701px;font-size:14px;line-height:18px;color:#4a8fe0;white-space:nowrap">mch2962737352</span>
<span class="a" style="left:432px;top:701px;font-size:14px;line-height:18px;color:#555;white-space:nowrap">广州强少来了信息技术有限公司7</span>
<span class="a" style="left:672px;top:694px;font-size:14px;line-height:16px;color:#555;white-space:nowrap">广州强少来了信息技术有限<br>公司7</span>
<span class="a" style="left:862px;top:701px;font-size:14px;line-height:18px;color:#555;white-space:nowrap">普通商户</span>
<span class="a" style="left:1133px;top:694px;font-size:14px;line-height:16px;color:#555;white-space:nowrap">广州强少来了信息技术有限<br>公司7</span>
<span class="a" style="left:1323px;top:701px;font-size:14px;line-height:18px;color:#555;white-space:nowrap">启用</span>
<div class="a" style="left:276px;top:733px;width:1200px;height:46px;background:#d0d9d1"></div>
<span class="a" style="left:292px;top:747px;font-size:14px;line-height:18px;color:#4a8fe0;white-space:nowrap">mch3572581390</span>
<span class="a" style="left:432px;top:747px;font-size:14px;line-height:18px;color:#555;white-space:nowrap">广州强少来了信息技术有限公司8</span>
<span class="a" style="left:672px;top:740px;font-size:14px;line-height:16px;color:#555;white-space:nowrap">广州强少来了信息技术有限<br>公司8</span>
<span class="a" style="left:862px;top:747px;font-size:14px;line-height:18px;color:#555;white-space:nowrap">普通商户</span>
<span class="a" style="left:1133px;top:740px;font-size:14px;line-height:16px;color:#555;white-space:nowrap">广州强少来了信息技术有限<br>公司8</span>
<span class="a" style="left:1323px;top:747px;font-size:14px;line-height:18px;color:#555;white-space:nowrap">启用</span>
<div class="a" style="left:276px;top:779px;width:1200px;height:46px;background:#d8e1d9"></div>
<span class="a" style="left:672px;top:787px;font-size:14px;line-height:15px;color:#555;white-space:nowrap">广州强少来了信息技术有限</span>
<span class="a" style="left:1133px;top:787px;font-size:14px;line-height:15px;color:#555;white-space:nowrap">广州强少来了信息技术有限</span>
</div>
<div class="a" style="left:1368px;top:383px;width:8px;height:78px;border:1px solid rgba(255,255,255,0.9);border-radius:4px;background:rgba(205,205,205,0.6)"></div>
<div class="a" style="left:648px;top:836px;width:80px;height:9px;border:1.5px solid #fff;border-radius:5px;background:#ddd"></div>
</div>


<!-- right panel content -->
<div class="a" style="left:1658px;top:117px;width:260px;height:885px;background:#fff"></div>
<svg class="a" style="left:1674px;top:130px" width="10" height="15" viewBox="0 0 10 15"><path d="M6.5 0.8 L1.5 8 L5.5 8 L3.5 14.2 L8.8 6 L4.8 6 Z" stroke="#2f6cf5" stroke-width="1.2" fill="none" stroke-linejoin="round"/></svg>
<span class="a" style="left:1687px;top:130px;font-size:12px;line-height:15px;color:#2f6cf5">交互</span>
<div class="a" style="left:1674px;top:152px;width:37px;height:3px;background:#2f6cf5"></div>
<svg class="a" style="left:1767px;top:131px" width="12" height="13" viewBox="0 0 12 13"><path d="M1.5 0.7 L10.5 0.7 Q11.3 0.7 11.3 1.5 L11.3 8.5 Q11.3 9.3 10.5 9.3 L6.5 9.3 L4.5 12 L4.5 9.3 L1.5 9.3 Q0.7 9.3 0.7 8.5 L0.7 1.5 Q0.7 0.7 1.5 0.7 Z" stroke="#444" stroke-width="1.2" fill="none"/><path d="M3.5 4 L8.5 4 M3.5 6 L7 6" stroke="#444" stroke-width="1"/></svg>
<span class="a" style="left:1783px;top:130px;font-size:12px;line-height:15px;color:#333">注释</span>
<svg class="a" style="left:1863px;top:131px" width="13" height="13" viewBox="0 0 13 13"><circle cx="6.5" cy="6.5" r="5.7" stroke="#444" stroke-width="1.2" fill="none"/><path d="M6.5 0.8 L6.5 12.2 M6.5 4 L10 2.5 M6.5 7 L11.5 5.5 M6.5 10 L11 9" stroke="#444" stroke-width="1"/></svg>
<span class="a" style="left:1878px;top:130px;font-size:12px;line-height:15px;color:#333">样式</span>
<div class="hl" style="left:1658px;top:155px;width:260px"></div>
<span class="a" style="left:1673px;top:164px;font-size:11px;line-height:14px;color:#999">页面交互</span>
<svg class="a" style="left:1852px;top:164px" width="11" height="15" viewBox="0 0 11 15"><path d="M1 5.5 L5.5 1 L10 5.5 M1 9.5 L5.5 14 L10 9.5" stroke="#444" stroke-width="1.3" fill="none"/></svg>
<svg class="a" style="left:1882px;top:164px" width="15" height="15" viewBox="0 0 15 15"><path d="M6 1 L1 1 L1 14 L14 14 L14 9" stroke="#444" stroke-width="1.3" fill="none"/><path d="M8 7 L14 1 M9.5 1 L14 1 L14 5.5" stroke="#444" stroke-width="1.3" fill="none"/></svg>
<div class="a" style="left:1674px;top:197px;width:228px;height:28px;background:#2d6ef0;border-radius:3px;text-align:center;font-size:14px;line-height:28px;color:#fff">新增交互</div>
<svg class="a" style="left:1772px;top:249px" width="32" height="32" viewBox="0 0 32 32"><circle cx="12" cy="12" r="10.3" stroke="#444" stroke-width="1.4" fill="none"/><circle cx="12" cy="12" r="6.3" stroke="#444" stroke-width="1.4" fill="none"/><circle cx="12" cy="12" r="1.8" fill="#444"/><path d="M13 13.5 L30 19.5 L24 22 L19 29.5 Z" fill="#fff" stroke="#444" stroke-width="1.4" stroke-linejoin="round"/><path d="M23 23 L28.5 28.5" stroke="#444" stroke-width="1.4"/></svg>
<div class="a" style="left:1658px;top:293px;width:260px;text-align:center;font-size:11.3px;line-height:14.5px;color:#999">在上面添加页面交互<br>或者在画布中选择一个元件<br>来创建交互</div>
<div class="hl" style="left:1658px;top:956px;width:260px"></div>
<svg class="a" style="left:1681px;top:973px" width="13" height="13" viewBox="0 0 13 13"><circle cx="6.5" cy="6.5" r="6.5" fill="#2f6cf5"/><path d="M4.6 5 Q4.6 3 6.5 3 Q8.4 3 8.4 4.8 Q8.4 6 6.5 6.8 L6.5 8" stroke="#fff" stroke-width="1.4" fill="none"/><circle cx="6.5" cy="10" r="0.9" fill="#fff"/></svg>
<span class="a" style="left:1699px;top:972px;font-size:13px;line-height:15px;color:#2f6cf5;white-space:nowrap">Need help with interactions?</span>
<svg class="a" style="left:1883px;top:975px" width="9" height="9" viewBox="0 0 9 9"><path d="M0.5 0.5 L8.5 8.5 M8.5 0.5 L0.5 8.5" stroke="#888" stroke-width="1.1"/></svg>
<!-- right panel -->
<div class="vl" style="left:1657px;top:117px;height:885px"></div>

</body></html>
